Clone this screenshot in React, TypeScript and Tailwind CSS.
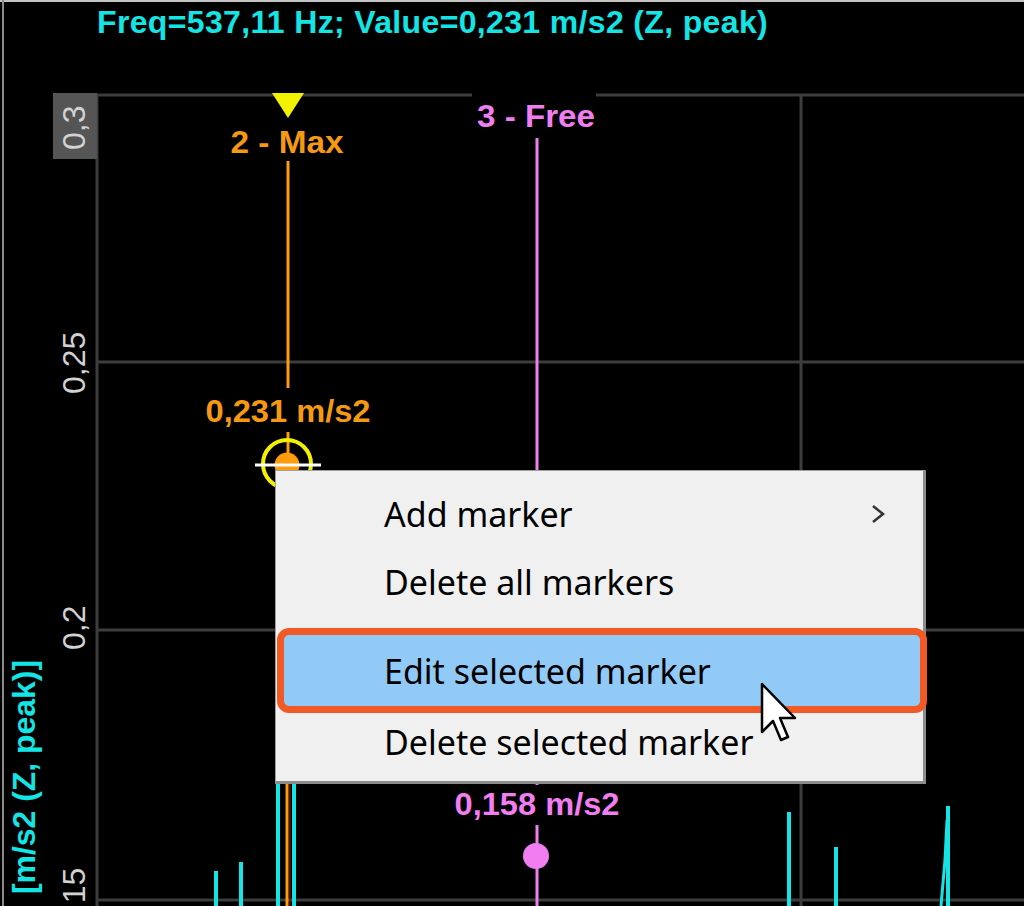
import React from "react";

const F = '"Liberation Sans", Arial, sans-serif';

function Chart() {
  const grid = "#3d3d3d";
  const cyan = "#14e4e4";
  const orange = "#ff9c0a";
  const orangeText = "#f39a12";
  const pink = "#f07ef0";
  const yellow = "#f2f200";
  const tick = "#d2d2d2";
  return (
    <svg
      width={1024}
      height={906}
      viewBox="0 0 1024 906"
      className="absolute left-0 top-0"
      fontFamily={F}
    >
      {/* grid */}
      <g stroke={grid} strokeWidth={3}>
        <line x1={97} y1={95} x2={1024} y2={95} />
        <line x1={97} y1={362} x2={1024} y2={362} />
        <line x1={97} y1={630} x2={1024} y2={630} />
        <line x1={97} y1={900} x2={1024} y2={900} />
        <line x1={97} y1={94} x2={97} y2={906} />
        <line x1={801} y1={95} x2={801} y2={906} />
      </g>
      {/* top value box */}
      <rect x={53} y={93} width={44} height={66} fill="#555555" />
      {/* y tick labels */}
      <g fill={tick} fontSize={32}>
        <text transform="translate(85,150) rotate(-90)">0,3</text>
        <text transform="translate(85,394) rotate(-90)">0,25</text>
        <text transform="translate(85,650) rotate(-90)">0,2</text>
        <text transform="translate(85,930) rotate(-90)">0,15</text>
      </g>
      {/* y axis title */}
      <text
        transform="translate(35,894) rotate(-90)"
        fill={cyan}
        fontSize={32}
        fontWeight="bold"
        textLength={234}
        lengthAdjust="spacingAndGlyphs"
      >
        [m/s2 (Z, peak)]
      </text>

      {/* spectrum spikes */}
      <g stroke={cyan} strokeWidth={4}>
        <line x1={216} y1={871} x2={216} y2={906} />
        <line x1={241} y1={862} x2={241} y2={906} />
        <line x1={278} y1={780} x2={278} y2={906} />
        <line x1={294} y1={780} x2={294} y2={906} />
        <line x1={789} y1={812} x2={789} y2={906} />
        <line x1={836} y1={847} x2={836} y2={906} />
        <line x1={948} y1={806} x2={948} y2={906} />
      </g>
      <path d="M941 906 L945 860 L947 820" stroke={cyan} strokeWidth={3} fill="none" />

      {/* marker 3 - Free */}
      <rect x={472} y={90} width={124} height={12} fill="#000" />
      <text
        x={536}
        y={127}
        textAnchor="middle"
        fill={pink}
        fontSize={32}
        fontWeight="bold"
        textLength={118}
        lengthAdjust="spacingAndGlyphs"
      >
        3 - Free
      </text>
      <line x1={537} y1={138} x2={537} y2={785} stroke={pink} strokeWidth={3} />
      <text
        x={537}
        y={815}
        textAnchor="middle"
        fill={pink}
        fontSize={32}
        fontWeight="bold"
        textLength={165}
        lengthAdjust="spacingAndGlyphs"
      >
        0,158 m/s2
      </text>
      <line x1={537} y1={825} x2={537} y2={906} stroke={pink} strokeWidth={3} />
      <circle cx={536} cy={856} r={13} fill={pink} />

      {/* marker 2 - Max */}
      <polygon points="272,93 304,93 288,118" fill={yellow} />
      <text
        x={287}
        y={153}
        textAnchor="middle"
        fill={orangeText}
        fontSize={32}
        fontWeight="bold"
        textLength={113}
        lengthAdjust="spacingAndGlyphs"
      >
        2 - Max
      </text>
      <line x1={288} y1={161} x2={288} y2={388} stroke={orange} strokeWidth={3} />
      <text
        x={288}
        y={422}
        textAnchor="middle"
        fill={orangeText}
        fontSize={32}
        fontWeight="bold"
        textLength={165}
        lengthAdjust="spacingAndGlyphs"
      >
        0,231 m/s2
      </text>
      <line x1={288} y1={432} x2={288} y2={455} stroke={orange} strokeWidth={3} />
      <circle cx={287} cy={464} r={24} fill="none" stroke={yellow} strokeWidth={4} />
      <circle cx={287} cy={465} r={12.5} fill={orange} />
      <line x1={255} y1={465} x2={321} y2={465} stroke="#ffffff" strokeWidth={3} />
      <line x1={287} y1={780} x2={287} y2={906} stroke={orange} strokeWidth={3} />
      <line x1={290} y1={784} x2={290} y2={906} stroke="#9a1000" strokeWidth={1} />
    </svg>
  );
}

function Cursor() {
  return (
    <svg
      width={40}
      height={62}
      viewBox="0 0 40 62"
      className="absolute left-[760px] top-[682px]"
    >
      <path
        d="M2 2 L2 50 L13 39 L21 58 L28 55 L20 36 L35 36 Z"
        fill="#ffffff"
        stroke="#000000"
        strokeWidth={2.5}
        strokeLinejoin="round"
      />
    </svg>
  );
}

function ContextMenu() {
  const text =
    "font-['Noto_Sans',sans-serif] text-[34px] leading-none tracking-normal text-black";
  return (
    <div className="absolute left-[275px] top-[470px] flex h-[314px] w-[651px] flex-col border-l border-t border-r-[3px] border-b-[3px] border-l-[#a0a0a0] border-t-[#a0a0a0] border-r-[#8c8c8c] border-b-[#8c8c8c] bg-[#f0f0f0] pt-[9px]">
      <div className="flex h-[68px] items-center justify-between pl-[108px] pr-[37px]">
        <span className={text}>Add marker</span>
        <svg width={16} height={22} viewBox="0 0 16 22">
          <polyline
            points="3,3 13,11 3,19"
            fill="none"
            stroke="#333333"
            strokeWidth={2.5}
          />
        </svg>
      </div>
      <div className="flex h-[68px] items-center pl-[108px]">
        <span className={text}>Delete all markers</span>
      </div>
      <div className="h-[12px]" />
      <div className="ml-[1px] -mr-[4px] flex h-[85px] items-center rounded-[12px] border-[7px] border-[#f15a24] bg-[#91c9f7] pl-[100px]">
        <span className={text}>Edit selected marker</span>
      </div>
      <div className="flex h-[58px] items-center pl-[108px]">
        <span className={text}>Delete selected marker</span>
      </div>
    </div>
  );
}

export default function App() {
  return (
    <div className="relative h-[906px] w-[1024px] overflow-hidden bg-black">
      <Chart />
      <div className="pointer-events-none absolute left-0 top-0 h-[2px] w-full bg-[#c4c4c4]" />
      <div className="pointer-events-none absolute left-[2px] top-0 h-full w-[2px] bg-[#8a8a8a]" />
      <div className="relative pl-[97px] pt-[6px]">
        <div className="font-['Liberation_Sans',Arial,sans-serif] text-[32px] font-bold leading-none tracking-[0.35px] text-[#14e4e4]">
          Freq=537,11 Hz; Value=0,231 m/s2 (Z, peak)
        </div>
      </div>
      <ContextMenu />
      <Cursor />
    </div>
  );
}
